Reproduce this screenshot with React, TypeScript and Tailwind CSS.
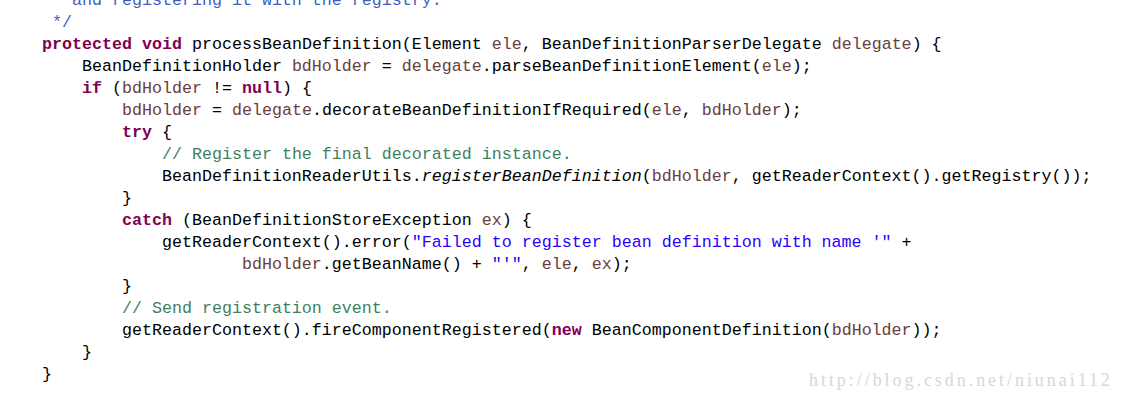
import React from "react";

type Tok = [string, string?];

const cls: Record<string, string> = {
  k: "font-bold text-[#7f0055]",
  v: "text-[#6a3e3e]",
  c: "text-[#3f7f5f]",
  s: "text-[#2a00ff]",
  j: "text-[#3f5fbf]",
  i: "italic",
};

const sp = (n: number) => " ".repeat(n);

const lines: Tok[][] = [
  [[sp(5) + "* and registering it with the registry.", "j"]],
  [[sp(5) + "*/", "j"]],
  [
    [sp(4)],
    ["protected", "k"],
    [" "],
    ["void", "k"],
    [" processBeanDefinition(Element "],
    ["ele", "v"],
    [", BeanDefinitionParserDelegate "],
    ["delegate", "v"],
    [") {"],
  ],
  [
    [sp(8) + "BeanDefinitionHolder "],
    ["bdHolder", "v"],
    [" = "],
    ["delegate", "v"],
    [".parseBeanDefinitionElement("],
    ["ele", "v"],
    [");"],
  ],
  [[sp(8)], ["if", "k"], [" ("], ["bdHolder", "v"], [" != "], ["null", "k"], [") {"]],
  [
    [sp(12)],
    ["bdHolder", "v"],
    [" = "],
    ["delegate", "v"],
    [".decorateBeanDefinitionIfRequired("],
    ["ele", "v"],
    [", "],
    ["bdHolder", "v"],
    [");"],
  ],
  [[sp(12)], ["try", "k"], [" {"]],
  [[sp(16)], ["// Register the final decorated instance.", "c"]],
  [
    [sp(16) + "BeanDefinitionReaderUtils."],
    ["registerBeanDefinition", "i"],
    ["("],
    ["bdHolder", "v"],
    [", getReaderContext().getRegistry());"],
  ],
  [[sp(12) + "}"]],
  [[sp(12)], ["catch", "k"], [" (BeanDefinitionStoreException "], ["ex", "v"], [") {"]],
  [
    [sp(16) + "getReaderContext().error("],
    ['"Failed to register bean definition with name \'"', "s"],
    [" +"],
  ],
  [
    [sp(24)],
    ["bdHolder", "v"],
    [".getBeanName() + "],
    ['"\'"', "s"],
    [", "],
    ["ele", "v"],
    [", "],
    ["ex", "v"],
    [");"],
  ],
  [[sp(12) + "}"]],
  [[sp(12)], ["// Send registration event.", "c"]],
  [
    [sp(12) + "getReaderContext().fireComponentRegistered("],
    ["new", "k"],
    [" BeanComponentDefinition("],
    ["bdHolder", "v"],
    ["));"],
  ],
  [[sp(8) + "}"]],
  [[sp(4) + "}"]],
];

export default function App() {
  return (
    <div className="relative w-[1121px] h-[400px] overflow-hidden bg-white">
      <div
        className="-mt-[10px] pl-[2px] text-[16.667px] leading-[22px] text-black"
        style={{ fontFamily: '"Liberation Mono", "DejaVu Sans Mono", monospace' }}
      >
        {lines.map((line, i) => (
          <div key={i} className="h-[22px] whitespace-pre">
            {line.map(([t, c], j) =>
              c ? (
                <span key={j} className={cls[c]}>
                  {t}
                </span>
              ) : (
                <span key={j}>{t}</span>
              )
            )}
          </div>
        ))}
      </div>
      <div
        className="absolute left-[809px] top-[370px] text-[18px] leading-[20px] tracking-[2.95px] text-[#d8d8d2] whitespace-pre"
        style={{ fontFamily: '"Liberation Serif", serif' }}
      >
        http://blog.csdn.net/niunai112
      </div>
    </div>
  );
}
